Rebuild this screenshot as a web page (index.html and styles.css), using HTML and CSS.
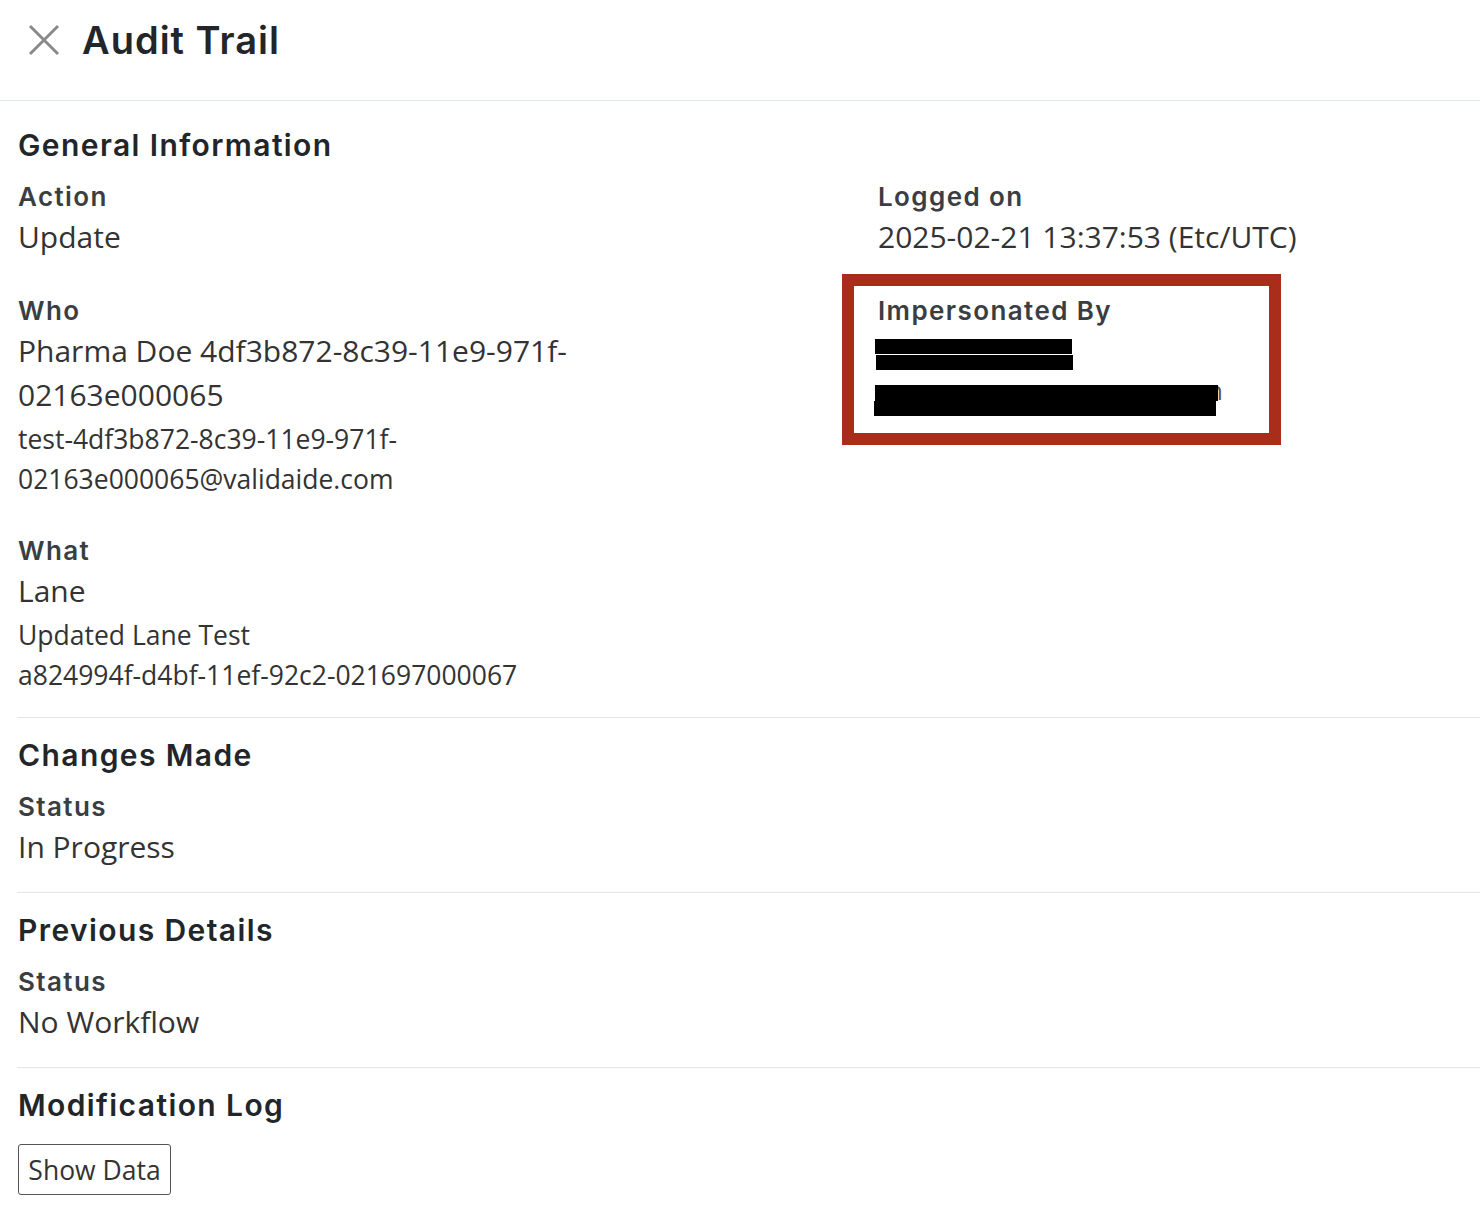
FILE: index.html
```html
<!DOCTYPE html>
<html lang="en">
<head>
<meta charset="utf-8">
<title>Audit Trail</title>
<link rel="stylesheet" href="styles.css">
</head>
<body>
<div class="panel">
  <header class="panel-header">
    <button class="close" aria-label="Close">
      <svg viewBox="0 0 32 32" width="32" height="32"><path d="M2 2 L30 30 M30 2 L2 30" stroke="#8a8a8a" stroke-width="3" fill="none"/></svg>
    </button>
    <h1 class="title">Audit Trail</h1>
  </header>

  <main class="content">
    <section class="section first">
      <h2 class="section-title">General Information</h2>
      <div class="grid">
        <div class="col">
          <div class="field">
            <div class="label">Action</div>
            <div class="value">Update</div>
          </div>
          <div class="field">
            <div class="label">Who</div>
            <div class="value">Pharma Doe 4df3b872-8c39-11e9-971f-02163e000065</div>
            <div class="small">test-4df3b872-8c39-11e9-971f-02163e000065@validaide.com</div>
          </div>
          <div class="field">
            <div class="label">What</div>
            <div class="value">Lane</div>
            <div class="small">Updated Lane Test</div>
            <div class="small">a824994f-d4bf-11ef-92c2-021697000067</div>
          </div>
        </div>
        <div class="col">
          <div class="field">
            <div class="label">Logged on</div>
            <div class="value">2025-02-21 13:37:53 (Etc/UTC)</div>
          </div>
          <div class="field highlighted">
            <div class="annotation"></div>
            <div class="label">Impersonated By</div>
            <div class="redacted line1">
              <span class="bar b1"></span>
              <span class="bar b2"></span>
            </div>
            <div class="redacted line2">
              <span class="tail">n</span>
              <span class="bar b3"></span>
              <span class="bar b4"></span>
            </div>
          </div>
        </div>
      </div>
    </section>

    <section class="section">
      <h2 class="section-title">Changes Made</h2>
      <div class="field">
        <div class="label">Status</div>
        <div class="value">In Progress</div>
      </div>
    </section>

    <section class="section">
      <h2 class="section-title">Previous Details</h2>
      <div class="field">
        <div class="label">Status</div>
        <div class="value">No Workflow</div>
      </div>
    </section>

    <section class="section last">
      <h2 class="section-title">Modification Log</h2>
      <button class="show-data">Show Data</button>
    </section>
  </main>
</div>
</body>
</html>
```

FILE: styles.css
```css
* { box-sizing: border-box; }
html, body { margin: 0; padding: 0; background: #fff; }
body {
  font-family: "Open Sans", "Liberation Sans", sans-serif;
  color: #333;
}
.panel { width: 1480px; }

.panel-header {
  height: 101px;
  border-bottom: 1px solid #dfe4ea;
  display: flex;
  align-items: flex-start;
  padding: 18px 0 0 27px;
  gap: 21px;
}
.close {
  border: 0; background: none; padding: 0; margin: 0;
  width: 34px; height: 44px;
  display: flex; align-items: center; justify-content: center;
}
.title {
  margin: 0;
  font-family: Inter, "Noto Sans", sans-serif;
  font-weight: 600;
  font-size: 38px;
  line-height: 44px;
  color: #22262a;
  letter-spacing: 1px;
}

.content { padding-left: 17px; }
.section {
  border-bottom: 1px solid #e3e6e9;
  padding: 17px 0 23px 1px;
}
.section.first { padding-top: 24px; padding-bottom: 22px; }
.section.last { border-bottom: 0; }

.section-title {
  margin: 0 0 13px;
  font-family: Inter, "Noto Sans", sans-serif;
  font-weight: 600;
  font-size: 30px;
  line-height: 40px;
  color: #22262a;
  letter-spacing: 1.4px;
}

.grid {
  display: grid;
  grid-template-columns: 700px 1fr;
  column-gap: 160px;
}
.col { display: flex; flex-direction: column; gap: 33px; }

.label {
  font-family: Inter, "Noto Sans", sans-serif;
  font-weight: 600;
  font-size: 26px;
  line-height: 37px;
  color: #3a3e43;
  letter-spacing: 1.4px;
}
.value {
  font-size: 30px;
  line-height: 44px;
  color: #333;
}
.small {
  font-size: 26.5px;
  line-height: 40px;
  color: #333;
}
.value + .small { margin-top: 2px; }

.highlighted { position: relative; }
.annotation {
  position: absolute;
  left: -36px;
  top: -18px;
  width: 439px;
  height: 171px;
  border: 12px solid #a82d1b;
  pointer-events: none;
}
.redacted { position: relative; height: 44px; }
.bar { display: block; position: relative; z-index: 1; background: #000; height: 15px; }
.line1 { padding-top: 10px; }
.line1 .b1 { width: 197px; margin-left: -3px; }
.line1 .b2 { width: 197px; margin-left: -2px; margin-top: 1px; }
.line2 { padding-top: 12px; }
.line2 .b3 { width: 343px; margin-left: -3px; height: 16px; }
.line2 .b4 { width: 342px; margin-left: -4px; }
.tail {
  position: absolute;
  left: 329px;
  top: -3px;
  font-size: 26px;
  line-height: 40px;
  color: #555;
  z-index: 0;
}

.show-data {
  font-family: "Open Sans", sans-serif;
  font-size: 26.5px;
  line-height: 32px;
  color: #333;
  background: #fff;
  border: 1.5px solid #555;
  border-radius: 3px;
  height: 51px;
  width: 153px;
  padding: 0;
  margin-top: 6px;
}
```
